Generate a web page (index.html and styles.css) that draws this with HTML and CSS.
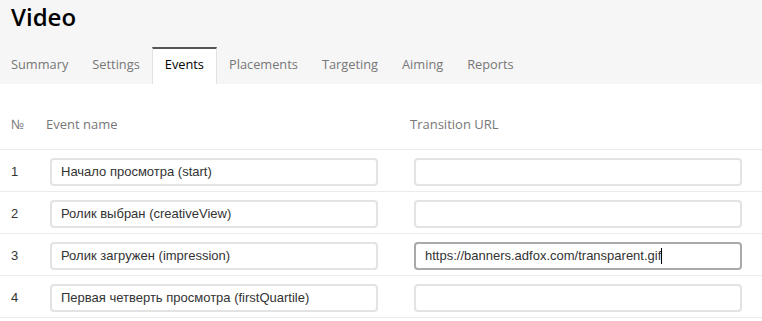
FILE: index.html
```html
<!DOCTYPE html>
<html lang="en">
<head>
    <meta charset="UTF-8">
    <title>Video</title>
    <link rel="stylesheet" href="styles.css">
</head>
<body>
<div class="header">
    <h1>Video</h1>
    <div class="tabs">
        <span class="tab">Summary</span>
        <span class="tab">Settings</span>
        <span class="tab active">Events</span>
        <span class="tab">Placements</span>
        <span class="tab">Targeting</span>
        <span class="tab">Aiming</span>
        <span class="tab">Reports</span>
    </div>
</div>

<div class="events">
    <div class="row head">
        <div class="num">№</div>
        <div class="cell">Event name</div>
        <div class="cell">Transition URL</div>
    </div>
    <div class="row">
        <div class="num">1</div>
        <div class="cell"><input class="field" value="Начало просмотра (start)"></div>
        <div class="cell"><input class="field" value=""></div>
    </div>
    <div class="row">
        <div class="num">2</div>
        <div class="cell"><input class="field" value="Ролик выбран (creativeView)"></div>
        <div class="cell"><input class="field" value=""></div>
    </div>
    <div class="row">
        <div class="num">3</div>
        <div class="cell"><input class="field" value="Ролик загружен (impression)"></div>
        <div class="cell"><div class="field focused">https://banners.adfox.com/transparent.gif<span class="caret"></span></div></div>
    </div>
    <div class="row">
        <div class="num">4</div>
        <div class="cell"><input class="field" value="Первая четверть просмотра (firstQuartile)"></div>
        <div class="cell"><input class="field" value=""></div>
    </div>
</div>
</body>
</html>
```

FILE: styles.css
```css
body {
    margin: 0;
    background-color: #FFFFFF;
    font-family: "Liberation Sans", Arial, sans-serif;
    color: #333333;
}
.header {
    background-color: #F6F6F6;
    height: 84px;
    display: flex;
    flex-direction: column;
    justify-content: space-between;
}
h1 {
    margin: 0;
    padding: 1px 0 0 11px;
    font-family: "Open Sans", sans-serif;
    font-size: 24px;
    font-weight: 600;
    color: #000000;
    line-height: 32px;
}
.tabs {
    display: flex;
}
.tab {
    font-family: "Open Sans", sans-serif;
    font-size: 12.8px;
    color: #777777;
    padding: 6px 11px 0;
    height: 37px;
    box-sizing: border-box;
    border-top: 2px solid transparent;
    border-left: 1px solid transparent;
    border-right: 1px solid transparent;
}
.tab:first-child {
    padding-left: 10px;
}
.tab.active {
    background-color: #FFFFFF;
    color: #000000;
    padding: 6px 12px 0;
    border-top-color: #555555;
    border-left-color: #E2E2E2;
    border-right-color: #E2E2E2;
}
.events {
    display: flex;
    flex-direction: column;
}
.row {
    display: grid;
    grid-template-columns: 46px 364px 1fr;
    align-items: center;
    height: 42px;
    padding-top: 2px;
    box-sizing: border-box;
    border-bottom: 1px solid #EBEBEB;
    font-size: 13px;
}
.row.head {
    height: 66px;
    padding-top: 0;
    align-items: end;
    padding-bottom: 16px;
    font-family: "Open Sans", sans-serif;
    color: #777777;
}
.num {
    padding-left: 11px;
}
.field {
    display: block;
    margin-left: 4px;
    width: 328px;
    height: 28px;
    box-sizing: border-box;
    border: 2px solid #E3E3E3;
    border-radius: 4px;
    padding: 0 9px;
    font-family: "Liberation Sans", Arial, sans-serif;
    font-size: 13px;
    color: #333333;
    background-color: #FFFFFF;
    outline: none;
}
.field.focused {
    border-color: #A9A9A9;
    line-height: 24px;
}
.caret {
    display: inline-block;
    width: 1px;
    height: 16px;
    background-color: #000000;
    vertical-align: middle;
}
```
